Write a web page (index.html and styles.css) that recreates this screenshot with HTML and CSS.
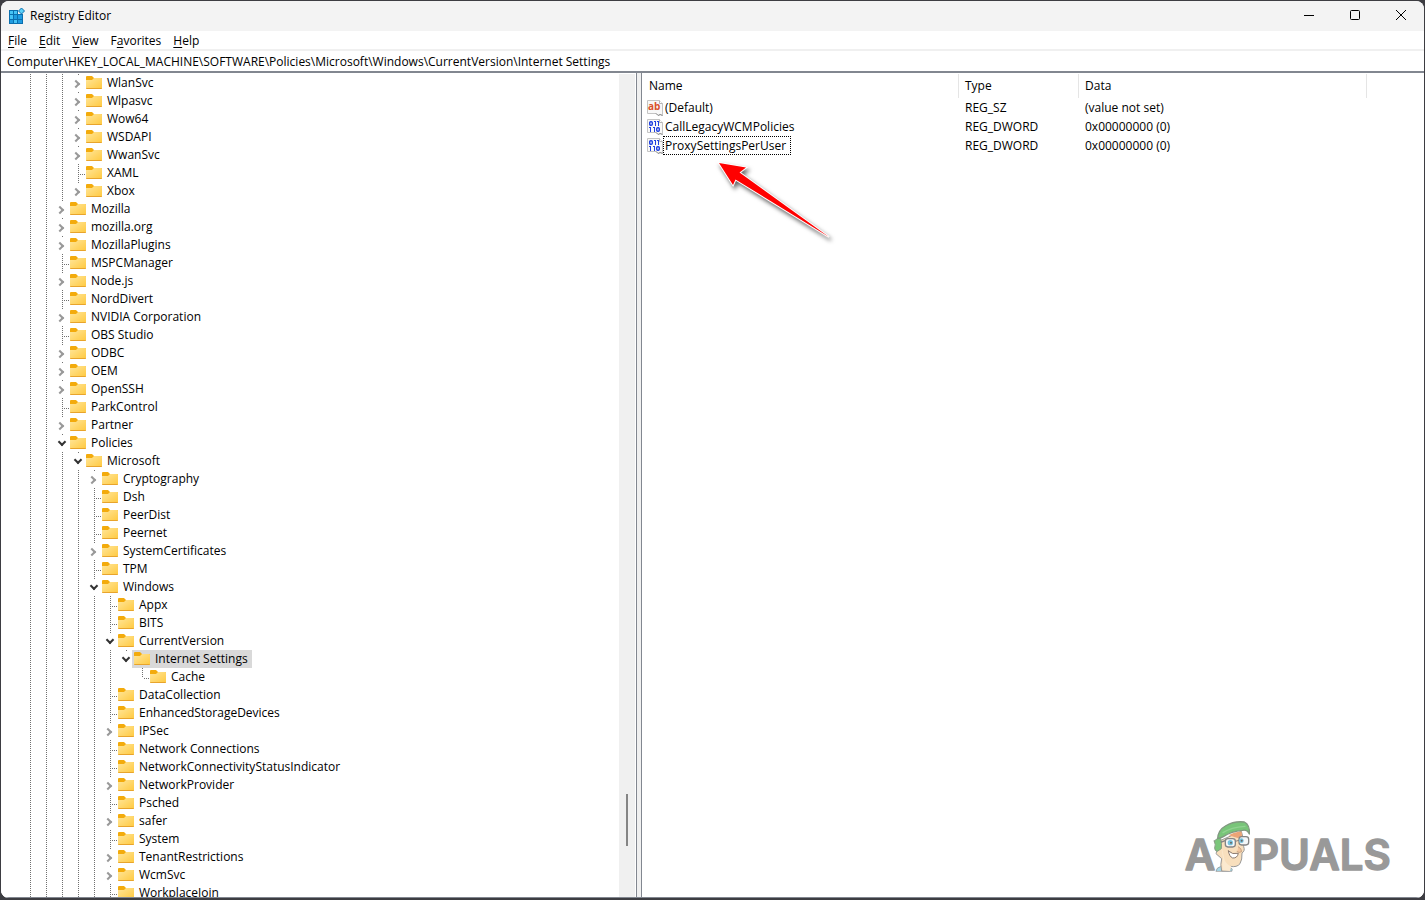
FILE: index.html
```html
<!DOCTYPE html>
<html lang="en">
<head>
  <meta charset="UTF-8">
  <title>Registry Editor</title>
  <link rel="stylesheet" href="styles.css">
</head>
<body>

  <!-- Shared icons -->
  <svg class="sprite" aria-hidden="true">
    <defs>
      <linearGradient id="folderFront" x1="0" y1="0" x2="1" y2="1">
        <stop offset="0" stop-color="#ffe69a"/>
        <stop offset="1" stop-color="#ffc93f"/>
      </linearGradient>
    </defs>
    <symbol id="folder" viewBox="0 0 16 16">
      <path d="M0 2a1 1 0 0 1 1-1h5l2 2h7a1 1 0 0 1 1 1v3H0z" fill="#f3ab0c"/>
      <path d="M0 5h6l2-2h7a1 1 0 0 1 1 1v9a1 1 0 0 1-1 1H1a1 1 0 0 1-1-1z" fill="url(#folderFront)"/>
      <path d="M0 13h16a1 1 0 0 1-1 1H1a1 1 0 0 1-1-1z" fill="#e8a42c"/>
    </symbol>
    <symbol id="page" viewBox="0 0 16 16">
      <path d="M.5.5h12l3 3v12l-2-1-2 1-2-2H.5z" fill="#f8f8f8" stroke="#c4c4c4"/>
      <path d="M12.500.5v3h3" fill="#fff" stroke="#b5b5b5"/>
      <path d="M9 13.500l2 2 2-1 2.500 1" fill="none" stroke="#8c8c8c"/>
    </symbol>
    <symbol id="binary" viewBox="0 0 16 16">
      <use href="#page"/>
      <g fill="none" stroke="#1f40e0" stroke-width="1.400">
        <rect x="2.700" y="2.700" width="2.600" height="3.600" rx="1"/>
        <rect x="9.700" y="8.700" width="2.600" height="3.600" rx="1"/>
      </g>
      <path d="M7 2h2v5H8V3H7zM10 2h2v5h-1V3h-1zM2 8h2v5H3V9H2zM6 8h2v5H7V9H6z" fill="#1f40e0"/>
    </symbol>
  </svg>

  <div class="window">
    <header class="titlebar">
      <svg class="app-icon" viewBox="0 0 16 16" aria-hidden="true">
        <path d="M0 2h9v4h5v10H0z" fill="#0b6fae"/>
        <g fill="#45c3f5">
          <path d="M1 3h3v3H1zM5 3h3v3H5zM1 7h3v4H1zM5 12h3v3H5z"/>
        </g>
        <g fill="#1f9be0">
          <path d="M5 7h3v4H5zM9 7h4v4H9zM1 12h3v3H1zM9 12h4v3H9z"/>
        </g>
        <path d="M12.500 0L15.500 3l-3 3-3-3z" fill="#5bd0f8" stroke="#0b6fae"/>
      </svg>
      <h1>Registry Editor</h1>
      <div class="window-buttons">
        <button aria-label="Minimize"><svg viewBox="0 0 12 12"><path d="M1 6.500h10"/></svg></button>
        <button aria-label="Maximize"><svg viewBox="0 0 12 12"><rect x="1.500" y="1.500" width="9" height="9" rx="1"/></svg></button>
        <button aria-label="Close"><svg viewBox="0 0 12 12"><path d="M1 1l10 10M11 1L1 11"/></svg></button>
      </div>
    </header>

    <nav class="menubar">
      <button><u>F</u>ile</button>
      <button><u>E</u>dit</button>
      <button><u>V</u>iew</button>
      <button>F<u>a</u>vorites</button>
      <button><u>H</u>elp</button>
    </nav>

    <input class="address" type="text" aria-label="Address" value="Computer\HKEY_LOCAL_MACHINE\SOFTWARE\Policies\Microsoft\Windows\CurrentVersion\Internet Settings">

    <main class="panes">
      <section class="tree-pane">
        <div class="tree">
          <!-- Root levels are scrolled out above the first row -->
          <ul class="root"><li><ul><li><ul>
            <li><ul>
              <li><details><summary><svg><use href="#folder"/></svg><span>WlanSvc</span></summary></details></li>
              <li><details><summary><svg><use href="#folder"/></svg><span>Wlpasvc</span></summary></details></li>
              <li><details><summary><svg><use href="#folder"/></svg><span>Wow64</span></summary></details></li>
              <li><details><summary><svg><use href="#folder"/></svg><span>WSDAPI</span></summary></details></li>
              <li><details><summary><svg><use href="#folder"/></svg><span>WwanSvc</span></summary></details></li>
              <li><div class="leaf"><svg><use href="#folder"/></svg><span>XAML</span></div></li>
              <li><details><summary><svg><use href="#folder"/></svg><span>Xbox</span></summary></details></li>
            </ul></li>
            <li><details><summary><svg><use href="#folder"/></svg><span>Mozilla</span></summary></details></li>
            <li><details><summary><svg><use href="#folder"/></svg><span>mozilla.org</span></summary></details></li>
            <li><details><summary><svg><use href="#folder"/></svg><span>MozillaPlugins</span></summary></details></li>
            <li><div class="leaf"><svg><use href="#folder"/></svg><span>MSPCManager</span></div></li>
            <li><details><summary><svg><use href="#folder"/></svg><span>Node.js</span></summary></details></li>
            <li><div class="leaf"><svg><use href="#folder"/></svg><span>NordDivert</span></div></li>
            <li><details><summary><svg><use href="#folder"/></svg><span>NVIDIA Corporation</span></summary></details></li>
            <li><div class="leaf"><svg><use href="#folder"/></svg><span>OBS Studio</span></div></li>
            <li><details><summary><svg><use href="#folder"/></svg><span>ODBC</span></summary></details></li>
            <li><details><summary><svg><use href="#folder"/></svg><span>OEM</span></summary></details></li>
            <li><details><summary><svg><use href="#folder"/></svg><span>OpenSSH</span></summary></details></li>
            <li><div class="leaf"><svg><use href="#folder"/></svg><span>ParkControl</span></div></li>
            <li><details><summary><svg><use href="#folder"/></svg><span>Partner</span></summary></details></li>
            <li class="more"><details open><summary><svg><use href="#folder"/></svg><span>Policies</span></summary>
              <ul>
                <li class="more"><details open><summary><svg><use href="#folder"/></svg><span>Microsoft</span></summary>
                  <ul>
                    <li><details><summary><svg><use href="#folder"/></svg><span>Cryptography</span></summary></details></li>
                    <li><div class="leaf"><svg><use href="#folder"/></svg><span>Dsh</span></div></li>
                    <li><div class="leaf"><svg><use href="#folder"/></svg><span>PeerDist</span></div></li>
                    <li><div class="leaf"><svg><use href="#folder"/></svg><span>Peernet</span></div></li>
                    <li><details><summary><svg><use href="#folder"/></svg><span>SystemCertificates</span></summary></details></li>
                    <li><div class="leaf"><svg><use href="#folder"/></svg><span>TPM</span></div></li>
                    <li class="more"><details open><summary><svg><use href="#folder"/></svg><span>Windows</span></summary>
                      <ul>
                        <li><div class="leaf"><svg><use href="#folder"/></svg><span>Appx</span></div></li>
                        <li><div class="leaf"><svg><use href="#folder"/></svg><span>BITS</span></div></li>
                        <li><details open><summary><svg><use href="#folder"/></svg><span>CurrentVersion</span></summary>
                          <ul>
                            <li><details open><summary class="selected"><svg><use href="#folder"/></svg><span>Internet Settings</span></summary>
                              <ul>
                                <li><div class="leaf"><svg><use href="#folder"/></svg><span>Cache</span></div></li>
                              </ul>
                            </details></li>
                          </ul>
                        </details></li>
                        <li><div class="leaf"><svg><use href="#folder"/></svg><span>DataCollection</span></div></li>
                        <li><div class="leaf"><svg><use href="#folder"/></svg><span>EnhancedStorageDevices</span></div></li>
                        <li><details><summary><svg><use href="#folder"/></svg><span>IPSec</span></summary></details></li>
                        <li><div class="leaf"><svg><use href="#folder"/></svg><span>Network Connections</span></div></li>
                        <li><div class="leaf"><svg><use href="#folder"/></svg><span>NetworkConnectivityStatusIndicator</span></div></li>
                        <li><details><summary><svg><use href="#folder"/></svg><span>NetworkProvider</span></summary></details></li>
                        <li><div class="leaf"><svg><use href="#folder"/></svg><span>Psched</span></div></li>
                        <li><details><summary><svg><use href="#folder"/></svg><span>safer</span></summary></details></li>
                        <li><div class="leaf"><svg><use href="#folder"/></svg><span>System</span></div></li>
                        <li><details><summary><svg><use href="#folder"/></svg><span>TenantRestrictions</span></summary></details></li>
                        <li><details><summary><svg><use href="#folder"/></svg><span>WcmSvc</span></summary></details></li>
                        <li class="more"><div class="leaf"><svg><use href="#folder"/></svg><span>WorkplaceJoin</span></div></li>
                      </ul>
                    </details></li>
                  </ul>
                </details></li>
              </ul>
            </details></li>
          </ul></li></ul></li></ul>
        </div>
        <div class="scrollbar"><div class="thumb"></div></div>
      </section>

      <section class="values-pane">
        <table class="values">
          <colgroup>
            <col class="col-name"><col class="col-type"><col class="col-data"><col>
          </colgroup>
          <thead>
            <tr><th>Name</th><th>Type</th><th>Data</th><td></td></tr>
          </thead>
          <tbody>
            <tr>
              <td class="name">
                <svg viewBox="0 0 16 16"><use href="#page"/><text x="1" y="10" class="icon-ab">ab</text></svg>
                <span>(Default)</span>
              </td>
              <td>REG_SZ</td>
              <td>(value not set)</td>
              <td></td>
            </tr>
            <tr>
              <td class="name"><svg><use href="#binary"/></svg><span>CallLegacyWCMPolicies</span></td>
              <td>REG_DWORD</td>
              <td>0x00000000 (0)</td>
              <td></td>
            </tr>
            <tr>
              <td class="name"><svg><use href="#binary"/></svg><span class="focused">ProxySettingsPerUser</span></td>
              <td>REG_DWORD</td>
              <td>0x00000000 (0)</td>
              <td></td>
            </tr>
          </tbody>
        </table>

        <!-- Pointer to the value -->
        <svg class="arrow" viewBox="0 0 120 84" aria-hidden="true">
          <path d="M5 5l27 4.500-6.500 5L115 79 21.500 21.500 19 27z"/>
        </svg>

        <!-- Watermark -->
        <svg class="watermark" viewBox="45 30 627 156" role="img" aria-label="Appuals">
          <text x="44" y="179">A</text>
          <text x="246" y="179">PUALS</text>
          <g stroke-linejoin="round" stroke-linecap="round">
            <path d="M138 183q2-11 13-13l32 3q6 4 3 10z" fill="#a5d9ea" stroke="#858585" stroke-width="2"/>
            <path d="M150 92l64-28 7 26q1 15 0 20 5 13-5 19 1 20-6 32-9 12-30 8l-1 14h-24q-5-20 0-37l-16-14z" fill="#f8dfbd" stroke="#999" stroke-width="3"/>
            <path d="M151 95l8 48q-4 20-1 38l22 2 4-14q-14-4-20-18z" fill="#fbe9cf"/>
            <path d="M176 76q14-9 38-12l3 16-14 4z" fill="#eba476"/>
            <path d="M133 93l10-8 9 1q4 15 2 30l-12 8q-8-1-8-10 4-9-1-21z" fill="#7bc67b" stroke="#8a9b86" stroke-width="3"/>
            <path d="M143 86q1-26 23-38 27-16 57-12 17 8 15 36-7-14-20-11-34 2-58 19-7 4-17 6z" fill="#78c579" stroke="#819880" stroke-width="4"/>
            <path d="M159 68q24-16 66-19" fill="none" stroke="#91d291" stroke-width="4"/>
            <path d="M154 96l14-5" fill="none" stroke="#858585" stroke-width="4"/>
            <rect x="166" y="86" width="30" height="25" rx="8" fill="#f4f7f8" stroke="#858585" stroke-width="4"/>
            <rect x="207" y="80" width="29" height="25" rx="8" fill="#f4f7f8" stroke="#858585" stroke-width="4"/>
            <path d="M196 94l11-3" fill="none" stroke="#858585" stroke-width="3"/>
            <circle cx="181" cy="98" r="8" fill="#76c3df"/>
            <circle cx="214" cy="92" r="7" fill="#76c3df"/>
            <circle cx="183" cy="98" r="3" fill="#666"/>
            <circle cx="215" cy="92" r="3" fill="#666"/>
            <path d="M205 110q10 5 10 15-8 5-14 0" fill="#f2c6a0" stroke="#b28f73" stroke-width="2"/>
            <path d="M175 123q12 12 30 7-3 15-17 14-10-4-13-21z" fill="#fff" stroke="#8c7b70" stroke-width="3"/>
          </g>
        </svg>
      </section>
    </main>
  </div>

</body>
</html>
```
FILE: styles.css
```css
*,
*::before,
*::after {
  box-sizing: border-box;
}

body {
  margin: 0;
  height: 100vh;
  padding: 1px 1px 2px;
  background: #3d3d42;
  font-family: "Open Sans", sans-serif;
  font-size: 12px;
  color: #000;
  overflow: hidden;
}

button,
input {
  font: inherit;
  color: inherit;
  border: none;
  background: none;
}

.sprite {
  position: absolute;
  width: 0;
  height: 0;
}

.window {
  display: flex;
  flex-direction: column;
  height: 100%;
  border-radius: 8px;
  background: #fff;
  overflow: hidden;
}

/* Title bar */
.titlebar {
  display: flex;
  align-items: center;
  height: 30px;
  flex-shrink: 0;
  padding-left: 8px;
  background: #f3f3f3;
}

.app-icon {
  width: 16px;
  height: 16px;
  margin-right: 5px;
}

.titlebar h1 {
  margin: 0;
  padding-bottom: 2px;
  font-size: 12px;
  font-weight: normal;
}

.window-buttons {
  display: flex;
  height: 100%;
  margin-left: auto;
}

.window-buttons button {
  display: flex;
  align-items: center;
  justify-content: center;
  width: 46px;
  padding: 0 0 2px;
}

.window-buttons svg {
  width: 12px;
  height: 12px;
  fill: none;
  stroke: #000;
}

/* Menu */
.menubar {
  display: flex;
  height: 18px;
  flex-shrink: 0;
  padding-left: 1px;
}

.menubar button {
  padding: 0 6px;
  line-height: 20px;
}

.menubar u {
  text-underline-offset: 2px;
}

.address {
  flex-shrink: 0;
  height: 24px;
  padding: 0 6px;
  border-top: 2px solid #f0f0f0;
  border-bottom: 2px solid #828790;
  outline: none;
}

/* Panes */
.panes {
  display: grid;
  grid-template-columns: minmax(0, 636fr) 4px minmax(0, 783fr);
  flex: 1;
  min-height: 0;
  background: #f0f0f0;
  border-bottom: 1px solid #828790;
}

.tree-pane {
  display: flex;
  background: #fff;
  border-right: 1px solid #828790;
  padding: 1px 1px 0 0;
  min-height: 0;
}

.tree {
  flex: 1;
  overflow: hidden;
}

.tree ul {
  list-style: none;
  margin: 0;
  padding: 0 0 0 16px;
}

.tree .root {
  padding-left: 21px;
}

/* Dotted guide line down the left of every item */
.tree li {
  background: repeating-linear-gradient(#707070 0 1px, transparent 1px 2px) 8px 0 / 1px 100% no-repeat;
}

.tree li li li li:last-child:not(.more) {
  background-size: 1px 10px;
}

summary,
.leaf {
  display: flex;
  align-items: center;
  width: max-content;
  height: 18px;
  list-style: none;
}

.leaf::before {
  content: "";
  width: 6px;
  height: 1px;
  margin: 2px 0 0 10px;
  background: repeating-linear-gradient(90deg, #707070 0 1px, transparent 1px 2px);
}

/* White box that hides the guide line behind the chevron */
summary::before {
  content: "";
  order: -2;
  width: 16px;
  height: 15px;
  margin-right: -13px;
  background: #fff;
}

summary::after {
  content: "";
  order: -1;
  width: 6px;
  height: 6px;
  margin: 2px 7px 0 0;
  border: solid #999;
  border-width: 0 2px 2px 0;
  transform: rotate(-45deg);
}

details[open] > summary::after {
  margin: 0 5px 3px 2px;
  border-color: #333;
  transform: rotate(45deg);
}

summary svg,
.leaf svg {
  width: 16px;
  height: 16px;
}

summary span,
.leaf span {
  padding: 0 4px 0 5px;
  line-height: 18px;
}

.selected svg,
.selected span {
  height: 18px;
  background: #d9d9d9;
}

.selected svg {
  box-shadow: -2px 0 #d9d9d9;
}

.scrollbar {
  display: flex;
  flex-direction: column;
  align-items: center;
  width: 16px;
  background: #f0f0f0;
}

.scrollbar::before {
  content: "";
  flex: 14;
}

.scrollbar::after {
  content: "";
  flex: 1;
}

.thumb {
  width: 2px;
  height: 52px;
  background: #858585;
}

/* Values */
.values-pane {
  grid-column: 3;
  position: relative;
  background: #fff;
  border-left: 1px solid #828790;
  padding-top: 1px;
}

.values {
  width: 100%;
  table-layout: fixed;
  border-collapse: separate;
  border-spacing: 0;
}

.col-name {
  width: 317px;
}

.col-type {
  width: 120px;
}

.col-data {
  width: 288px;
}

.values th {
  height: 24px;
  padding: 0 6px 1px;
  border-right: 1px solid #e5e5e5;
  font-weight: normal;
  text-align: left;
}

.values th:first-child {
  padding-left: 7px;
}

.values td {
  height: 19px;
  padding: 0 6px;
  line-height: 17px;
  white-space: nowrap;
}

.values .name {
  display: flex;
  align-items: center;
  padding: 0 5px;
}

.name svg {
  width: 16px;
  height: 16px;
}

.name span {
  padding: 0 4px 0 1px;
  border: 1px solid transparent;
}

.name .focused {
  border: 1px dotted #000;
}

.icon-ab {
  font: bold 10px "Open Sans", sans-serif;
  fill: #d9512c;
}

.arrow {
  position: absolute;
  left: 72px;
  top: 85px;
  width: 120px;
  height: 84px;
  overflow: visible;
  fill: #f00;
  stroke: #fff;
  stroke-width: 2px;
  paint-order: stroke;
  filter: drop-shadow(2px 3px 2px rgba(0, 0, 0, 0.6));
}

.watermark {
  position: absolute;
  right: 30px;
  bottom: 25px;
  width: 209px;
  height: 52px;
  overflow: visible;
}

.watermark text {
  font: 600 126px Inter, sans-serif;
  fill: #999;
  stroke: #999;
  stroke-width: 4px;
  stroke-linejoin: round;
}
```
